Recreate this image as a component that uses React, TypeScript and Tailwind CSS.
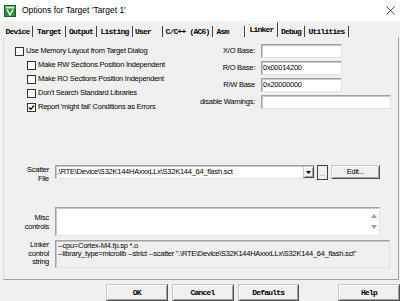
import React from "react";

const sans = "font-['Liberation_Sans',Arial,sans-serif]";
const mono = "font-['Liberation_Mono','Courier_New',monospace] font-bold text-[8px] tracking-[-0.8px]";

const tabs = [
  { name: "Device", w: "w-[30px]", pad: "" },
  { name: "Target", w: "w-[33px]", pad: "" },
  { name: "Output", w: "w-[31px]", pad: "" },
  { name: "Listing", w: "w-[36px]", pad: "" },
  { name: "User", w: "w-[30px]", pad: "pr-[9px]" },
  { name: "C/C++ (AC6)", w: "w-[50px]", pad: "" },
  { name: "Asm", w: "w-[32px]", pad: "pr-[12px]" },
  { name: "Linker", w: "w-[33px]", pad: "", active: true },
  { name: "Debug", w: "w-[27px]", pad: "" },
  { name: "Utilities", w: "w-[44px]", pad: "" },
];

const options = [
  { label: "Make RW Sections Position Independent", checked: false },
  { label: "Make RO Sections Position Independent", checked: false },
  { label: "Don't Search Standard Libraries", checked: false },
  { label: "Report 'might fail' Conditions as Errors", checked: true },
];

const bases = [
  { label: "X/O Base:", value: "", w: "w-[81px]" },
  { label: "R/O Base:", value: "0x00014200", w: "w-[81px]" },
  { label: "R/W Base", value: "0x20000000", w: "w-[81px]" },
  { label: "disable Warnings:", value: "", w: "w-[130px]" },
];

const sunken =
  "border border-t-[#a0a0a0] border-l-[#a0a0a0] border-r-[#e3e3e3] border-b-[#e3e3e3] shadow-[inset_1px_1px_0_#c8c8c8]";
const raised =
  "border border-t-[#c8c8c8] border-l-[#c8c8c8] border-r-[#505050] border-b-[#505050] shadow-[inset_1px_1px_0_#ffffff,inset_-1px_-1px_0_#a0a0a0] bg-[#f0f0f0]";

function Checkbox({ checked }: { checked: boolean }) {
  return (
    <span className="flex h-[9px] w-[9px] shrink-0 items-center justify-center border border-[#333333] bg-white">
      {checked && (
        <svg width="7" height="7" viewBox="0 0 7 7">
          <path d="M1 3.5 L2.8 5.3 L6 1.5" fill="none" stroke="#000" strokeWidth="1.3" />
        </svg>
      )}
    </span>
  );
}

function AppIcon() {
  return (
    <svg width="12" height="12" viewBox="0 0 12 12">
      <rect x="0.5" y="0.5" width="11" height="11" fill="#2f8f3a" stroke="#1d5e25" />
      <rect x="1.5" y="1.5" width="9" height="2" fill="#cfe9c9" />
      <path d="M3 4.5 L6 10 L9 4.5" fill="none" stroke="#ffffff" strokeWidth="1.4" />
    </svg>
  );
}

export default function App() {
  return (
    <div className={`relative h-[301px] w-[400px] overflow-hidden bg-[#f0f0f0] text-black ${sans}`}>
      {/* title bar */}
      <div className="flex h-[21px] items-center bg-white pl-[4px]">
        <AppIcon />
        <span className="ml-[6px] text-[8.5px] text-black">Options for Target 'Target 1'</span>
        <svg className="ml-auto mr-[5px]" width="9" height="9" viewBox="0 0 9 9">
          <path d="M0.5 0.5 L8.5 8.5 M8.5 0.5 L0.5 8.5" stroke="#333" strokeWidth="0.9" />
        </svg>
      </div>

      {/* tabs */}
      <div className={`flex h-[16px] items-end pl-[3px] ${mono}`}>
        {tabs.map((t) =>
          t.active ? (
            <div
              key={t.name}
              className={`${t.w} flex h-[15px] items-start justify-center border-l border-t border-r border-l-white border-t-white border-r-[#404040] pt-[2px] leading-[9px]`}
            >
              {t.name}
            </div>
          ) : (
            <div
              key={t.name}
              className={`${t.w} ${t.pad} flex h-[11px] items-center justify-center border-r border-[#404040] leading-[9px]`}
            >
              {t.name}
            </div>
          )
        )}
      </div>

      {/* tab panel */}
      <div className="ml-[3px] h-[243px] w-[396px] border-x border-b border-l-[#dcdcdc] border-r-[#a0a0a0] border-b-[#a0a0a0] text-[7.5px] tracking-[-0.25px]">
        {/* top section */}
        <div className="flex">
          <div className="w-[180px] pl-[11px] pt-[7px]">
            <div className="flex h-[14px] items-center gap-[2px] whitespace-nowrap">
              <Checkbox checked={false} />
              <span>Use Memory Layout from Target Dialog</span>
            </div>
            {options.map((o) => (
              <div key={o.label} className="flex h-[14px] items-center gap-[2px] whitespace-nowrap pl-[12px]">
                <Checkbox checked={o.checked} />
                <span>{o.label}</span>
              </div>
            ))}
          </div>
          <div className="pt-[7px]">
            {bases.map((b) => (
              <div key={b.label} className="flex h-[17px] items-start gap-[6px]">
                <span className="w-[71px] whitespace-nowrap text-right leading-[14px]">{b.label}</span>
                <div className={`${b.w} h-[14px] bg-white pl-[1px] leading-[12px] ${sunken}`}>{b.value}</div>
              </div>
            ))}
          </div>
        </div>

        {/* scatter file */}
        <div className="mt-[51px] flex items-start">
          <div className="w-[45px] text-right leading-[9px]">
            Scatter
            <br />
            File
          </div>
          <div className={`ml-[6px] flex h-[14px] w-[260px] items-stretch bg-white ${sunken}`}>
            <span className="flex-1 whitespace-nowrap pl-[1px] leading-[12px]">
              .\RTE\Device\S32K144HAxxxLLx\S32K144_64_flash.sct
            </span>
            <span className={`flex w-[11px] items-center justify-center ${raised}`}>
              <svg width="5" height="3" viewBox="0 0 5 3">
                <path d="M0 0 L5 0 L2.5 3 Z" fill="#000" />
              </svg>
            </span>
          </div>
          <div className="ml-[2px] flex h-[15px] w-[11px] items-end justify-center border border-[#404040] bg-[#f0f0f0] pb-[2px] text-[6px] leading-[6px] text-[#555]">
            ...
          </div>
          <div className={`ml-[3px] flex h-[14px] w-[49px] items-center justify-center ${raised}`}>Edit...</div>
        </div>

        {/* misc controls */}
        <div className="mt-[24px] flex items-start">
          <div className="w-[45px] pt-[6px] text-right leading-[9px]">
            Misc
            <br />
            controls
          </div>
          <div className={`ml-[6px] flex h-[29px] w-[325px] bg-white ${sunken}`}>
            <div className="flex-1" />
            <div className="flex w-[10px] flex-col items-center justify-between py-[6px]">
              <svg width="6" height="4" viewBox="0 0 6 4">
                <path d="M0 4 L6 4 L3 0 Z" fill="#a0a0a0" />
              </svg>
              <svg width="6" height="4" viewBox="0 0 6 4">
                <path d="M0 0 L6 0 L3 4 Z" fill="#a0a0a0" />
              </svg>
            </div>
          </div>
        </div>

        {/* linker control string */}
        <div className="mt-[4px] flex items-start">
          <div className="w-[45px] pt-[1px] text-right leading-[8.5px]">
            Linker
            <br />
            control
            <br />
            string
          </div>
          <div className={`ml-[6px] h-[28px] w-[335px] whitespace-nowrap bg-[#f0f0f0] pl-[2px] pt-[1px] leading-[8px] ${sunken}`}>
            --cpu=Cortex-M4.fp.sp *.o
            <br />
            --library_type=microlib --strict --scatter ".\RTE\Device\S32K144HAxxxLLx\S32K144_64_flash.sct"
          </div>
        </div>
      </div>

      {/* dialog buttons */}
      <div className={`mt-[4px] flex gap-[4px] pl-[106px] ${mono}`}>
        {["OK", "Cancel", "Defaults"].map((b) => (
          <div key={b} className={`flex h-[17px] w-[62px] items-center justify-center ${raised}`}>
            {b}
          </div>
        ))}
        <div className={`ml-[35px] flex h-[17px] w-[62px] items-center justify-center ${raised}`}>Help</div>
      </div>
    </div>
  );
}
